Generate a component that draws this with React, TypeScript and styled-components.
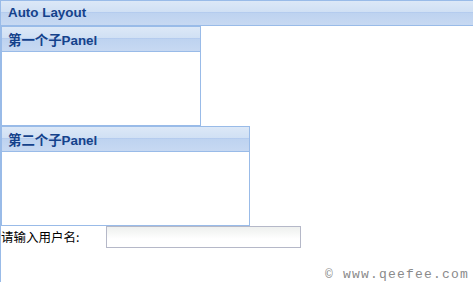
import React from "react";
import styled, { createGlobalStyle } from "styled-components";

const GlobalStyle = createGlobalStyle`
  html, body {
    margin: 0;
    padding: 0;
    background: #ffffff;
    overflow: hidden;
  }
  body {
    font-family: "Liberation Sans", "Noto Sans CJK SC", sans-serif;
  }
`;

const SPage = styled.div`
  width: 473px;
  height: 282px;
  position: relative;
  overflow: hidden;
`;

const SOuter = styled.div`
  width: 490px;
  height: 282px;
  display: flex;
  flex-direction: column;
`;

const SHeader = styled.div<{ $pad: number }>`
  height: 24px;
  box-sizing: content-box;
  display: flex;
  align-items: center;
  padding-left: ${(p) => p.$pad}px;
  border-bottom: 1px solid #99bbe8;
  background: linear-gradient(
    to bottom,
    #dce8f7 0%,
    #d0e0f4 46%,
    #b3cbee 48%,
    #bed3f0 52%,
    #c7d9f2 100%
  );
  color: #15428b;
  font-family: "Liberation Sans", "Noto Sans CJK SC", sans-serif;
  font-weight: bold;
  font-size: 13.4px;
  white-space: nowrap;
`;

const SOuterHeader = styled(SHeader)`
  border-top: 1px solid #99bbe8;
  border-left: 1px solid #99bbe8;
  padding-top: 0;
  padding-bottom: 1px;
  height: 23px;
`;

const SOuterBody = styled.div`
  flex: 1;
  border-left: 1px solid #99bbe8;
  display: flex;
  flex-direction: column;
  align-items: flex-start;
`;

const SPanel = styled.div<{ $width: number }>`
  width: ${(p) => p.$width}px;
  height: 100px;
  box-sizing: border-box;
  border: 1px solid #99bbe8;
  display: flex;
  flex-direction: column;
`;

const SPanelBody = styled.div`
  flex: 1;
  background: #ffffff;
`;

const SFormRow = styled.div`
  display: flex;
  align-items: center;
  height: 22px;
`;

const SLabel = styled.label`
  width: 105px;
  font-family: "Noto Sans CJK SC", sans-serif;
  font-size: 12.5px;
  color: #000000;
  line-height: 22px;
`;

const SInput = styled.input`
  width: 195px;
  height: 22px;
  box-sizing: border-box;
  margin: 0;
  padding: 1px 3px;
  border: 1px solid #b5b8c8;
  background: linear-gradient(to bottom, #eef0ee 0%, #ffffff 60%);
  font-family: "Liberation Sans", sans-serif;
  font-size: 12px;
  outline: none;
`;

const SCopyright = styled.div`
  position: absolute;
  right: 4px;
  bottom: 0px;
  font-family: "Liberation Mono", monospace;
  font-size: 13px;
  letter-spacing: 1.2px;
  color: #8a8a8a;
`;

const Panel = ({ title, width }: { title: string; width: number }) => (
  <SPanel $width={width}>
    <SHeader $pad={6}>{title}</SHeader>
    <SPanelBody />
  </SPanel>
);

const App = () => {
  return (
    <SPage>
      <GlobalStyle />
      <SOuter>
        <SOuterHeader $pad={7}>Auto Layout</SOuterHeader>
        <SOuterBody>
          <Panel title="第一个子Panel" width={200} />
          <Panel title="第二个子Panel" width={249} />
          <SFormRow>
            <SLabel>请输入用户名:</SLabel>
            <SInput type="text" />
          </SFormRow>
        </SOuterBody>
      </SOuter>
      <SCopyright>© www.qeefee.com</SCopyright>
    </SPage>
  );
};

export default App;
